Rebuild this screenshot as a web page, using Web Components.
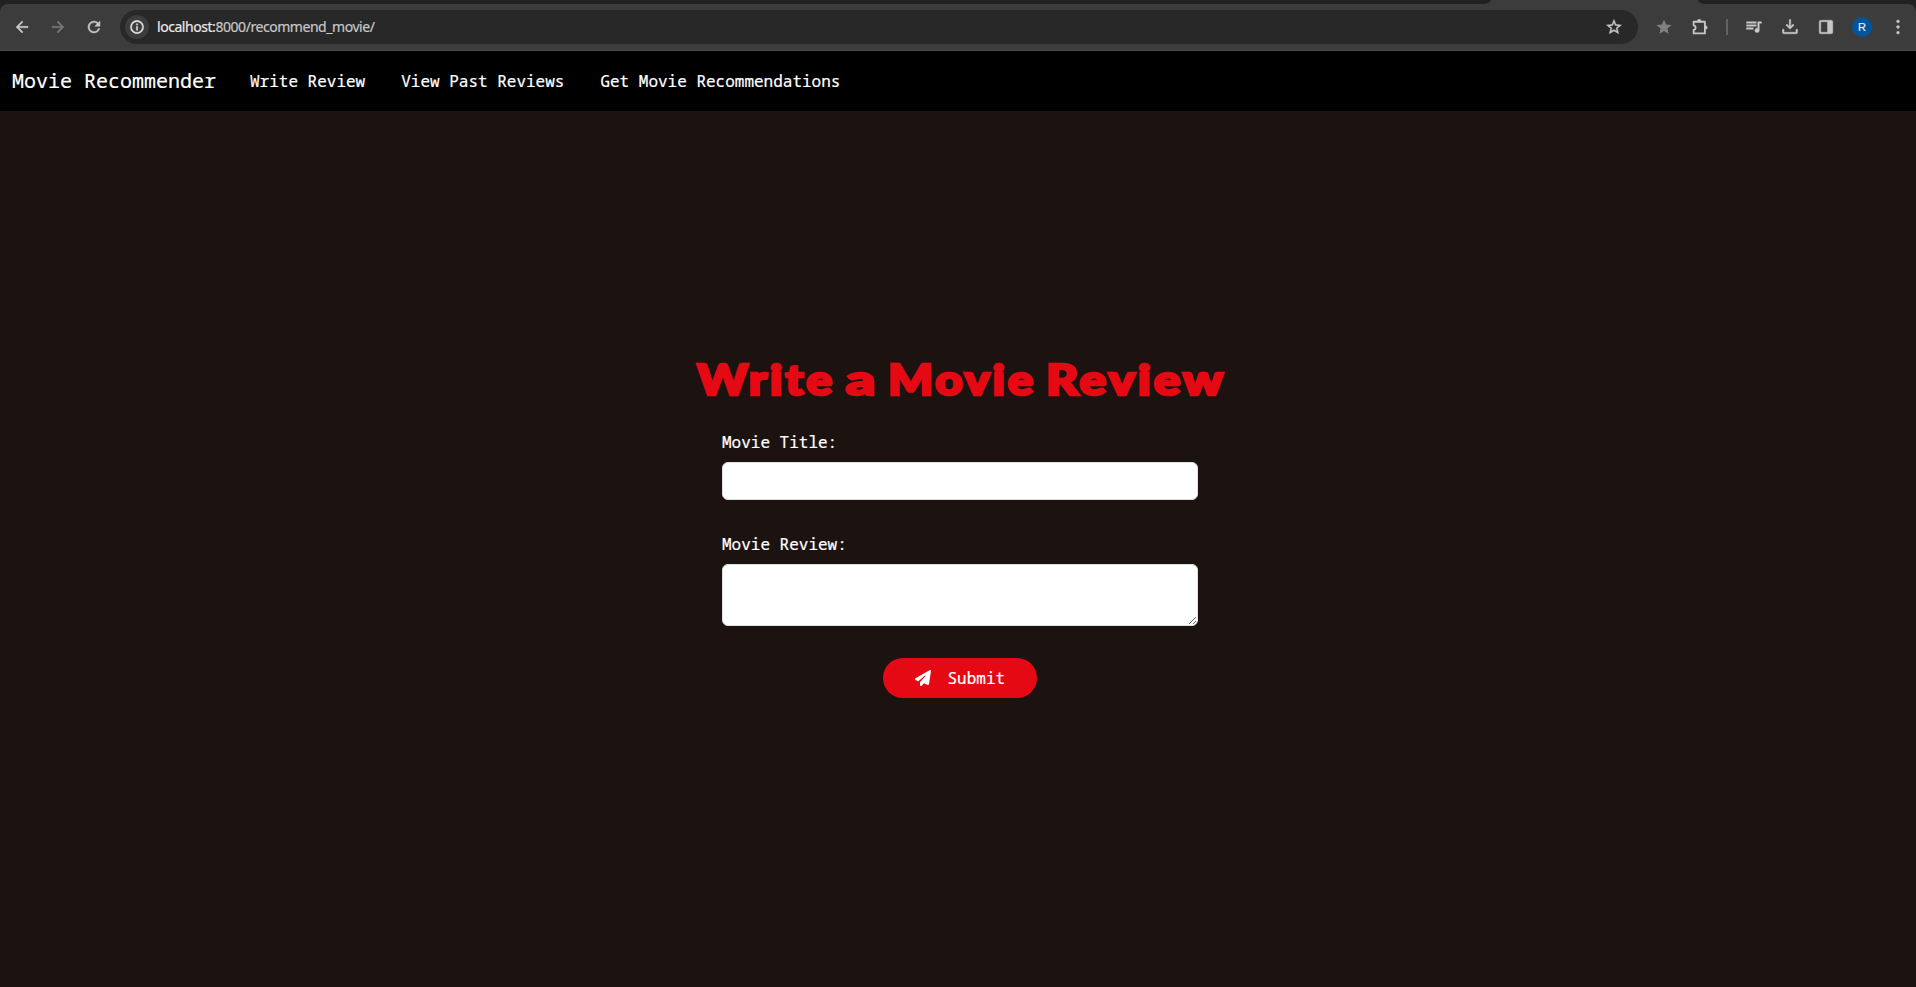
<!DOCTYPE html>
<html lang="en">
<head>
<meta charset="utf-8">
<title>Movie Recommender</title>
<style>
html,body{margin:0;height:100%;background:#1c1311;overflow:hidden}
</style>
</head>
<body>
<movie-app></movie-app>
<script>
const define = (name, html, setup) => customElements.define(name, class extends HTMLElement {
  constructor() {
    super();
    const t = document.createElement('template');
    t.innerHTML = html;
    this.attachShadow({mode: 'open'}).append(t.content.cloneNode(true));
    if (setup) setup(this, this.shadowRoot);
  }
});

const ICONS = {
  back: '<path d="M20 11H7.83l5.59-5.59L12 4l-8 8 8 8 1.41-1.41L7.83 13H20z"/>',
  forward: '<path d="M12 4l-1.41 1.41L16.17 11H4v2h12.17l-5.58 5.59L12 20l8-8z"/>',
  reload: '<path d="M17.65 6.35A7.96 7.96 0 0 0 12 4a8 8 0 1 0 7.73 10h-2.08A6 6 0 1 1 12 6c1.66 0 3.14.69 4.22 1.78L13 11h7V4z"/>',
  info: '<path d="M11 7h2v2h-2zm0 4h2v6h-2zm1-9a10 10 0 1 0 0 20 10 10 0 0 0 0-20zm0 18a8 8 0 1 1 0-16 8 8 0 0 1 0 16z"/>',
  star: '<path d="M22 9.24l-7.19-.62L12 2 9.19 8.63 2 9.24l5.46 4.73L5.82 21 12 17.27 18.18 21l-1.63-7.03zM12 15.4l-3.76 2.27 1-4.28-3.32-2.88 4.38-.38L12 6.1l1.71 4.04 4.38.38-3.32 2.88 1 4.28z"/>',
  starfill: '<path stroke="none" d="M12 17.27L18.18 21l-1.64-7.03L22 9.24l-7.19-.61L12 2 9.19 8.63 2 9.24l5.46 4.73L5.82 21z"/>',
  puzzle: '<path fill="none" stroke-width="2.4" stroke-linejoin="round" d="M3.500 5H18.500V20.500H3.500V16a3.200 3.200 0 0 0 0-6.300z"/><path d="M8.300 4.500a2.700 2.700 0 0 1 5.400 0zM19 10a2.700 2.700 0 0 1 0 5.400z"/>',
  queue: '<path d="M2 5h13v2H2zm0 4h13v2H2zm0 4h9v2H2zM17 5h5v2h-3v9.500a2.900 2.900 0 1 1-2-2.750z"/>',
  download: '<path d="M11 2h2v9.200l3.100-3.100 1.400 1.400L12 15 6.500 9.500l1.400-1.400 3.100 3.100zM2 15h2v4h16v-4h2v4a2 2 0 0 1-2 2H4a2 2 0 0 1-2-2z"/>',
  panel: '<path fill-rule="evenodd" d="M5 3h14a2 2 0 0 1 2 2v14a2 2 0 0 1-2 2H5a2 2 0 0 1-2-2V5a2 2 0 0 1 2-2zm0 2v14h9V5z"/>',
  dots: '<circle cx="12" cy="4.500" r="1.900"/><circle cx="12" cy="12" r="1.900"/><circle cx="12" cy="19.500" r="1.900"/>',
  plane: '<g stroke="none" transform="scale(.046875)"><path d="M498.100 5.600c10.100 7 15.400 19.100 13.500 31.200l-64 416c-1.500 9.700-7.400 18.200-16 23s-18.900 5.400-28 1.600L284 427.700l-68.500 74.100c-8.900 9.700-22.900 12.900-35.200 8.100S160 493.200 160 480V396.400c0-4 1.500-7.800 4.200-10.700L331.800 202.800c5.800-6.300 5.600-16-.4-22s-15.700-6.400-22-.7L106 360.800 17.700 316.600C7.100 311.300.3 300.700 0 288.900s5.900-22.800 16.100-28.700l448-256c10.700-6.100 23.900-5.500 34 1.400z"/></g>'
};
define('app-icon', `<style>:host{display:block;width:18px;height:18px;flex:none}svg{display:block;width:100%;height:100%;fill:currentColor;stroke:currentColor;stroke-width:.6px;overflow:visible}</style><svg viewBox="0 0 24 24"></svg>`,
  (host, root) => { root.querySelector('svg').innerHTML = ICONS[host.getAttribute('name')] || ''; });

define('tab-strip', `<style>
:host{display:flex;height:4px;background:#3c3c3c;justify-content:space-between}
i{display:block;background:#202221;height:4px}
.l{width:1491px;border-bottom-right-radius:8px 4px}.r{width:218px;border-bottom-left-radius:8px 4px}
</style><i class="l"></i><i class="r"></i>`);

define('address-bar', `<style>
:host{display:flex;align-items:center;box-sizing:border-box;width:1518px;height:34px;border-radius:17px;background:#282828;padding:0 15px 0 5px;color:#c7c7c7;font:14px "Noto Sans","Open Sans",sans-serif}
.info{display:grid;place-items:center;width:24px;height:24px;border-radius:50%;background:#3c3c3c;margin-right:8px}
.info app-icon{width:16px;height:16px;color:#e0e0e0}
.url{flex:1;white-space:pre;letter-spacing:-.45px;margin-top:-1px}
b{font-weight:400;color:#e8e8e8}
</style><span class="info"><app-icon name="info"></app-icon></span><span class="url"><b>localhost:</b>8000/recommend_movie/</span><app-icon name="star"></app-icon>`);

define('browser-toolbar', `<style>
:host{display:block;background:#202221}
.bar{display:flex;align-items:center;height:47px;box-sizing:border-box;background:#3c3c3c;border-bottom:1px solid #4b4b4b;border-radius:8px 8px 0 0;padding:0 9px 0 13px;color:#c7c7c7}
.nav{display:flex;gap:18px;margin-right:17px}.off{color:#777}
.right{display:flex;align-items:center;margin-left:17px;flex:1;gap:18px}
.sep{width:2px;height:16px;background:#626262;margin:0 -1px}
.av{width:20px;height:20px;border-radius:50%;background:#00559c;color:#e6eef7;display:grid;place-items:center;font:11px "Liberation Sans",sans-serif;margin:0 -1px}
.fs{color:#808080}
</style><div class="bar"><div class="nav"><app-icon name="back"></app-icon><app-icon class="off" name="forward"></app-icon><app-icon name="reload"></app-icon></div>
<address-bar></address-bar>
<div class="right"><app-icon class="fs" name="starfill"></app-icon><app-icon name="puzzle"></app-icon><span class="sep"></span><app-icon name="queue"></app-icon><app-icon name="download"></app-icon><app-icon name="panel"></app-icon><span class="av">R</span><app-icon name="dots"></app-icon></div></div>`);

define('nav-link', `<style>:host{display:block;font-size:16px;line-height:24px;white-space:pre}</style><slot></slot>`);
define('site-nav', `<style>
:host{display:flex;align-items:center;height:60px;background:#000;color:#fff;padding-left:12px;gap:36px}
.brand{font-size:20px;line-height:30px;white-space:pre;margin-right:-2px}
</style><span class="brand">Movie Recommender</span><nav-link>Write Review</nav-link><nav-link>View Past Reviews</nav-link><nav-link>Get Movie Recommendations</nav-link>`);

define('page-title', `<style>
:host{display:block;width:530px;height:58px}
svg{display:block;width:530px;height:58px;overflow:visible;fill:#e50914;stroke:#e50914;stroke-width:2.6px;letter-spacing:2.5px;font:900 41.5px Lato,sans-serif}
</style><svg viewBox="0 0 530 58"><text x="2" y="44" textLength="138" lengthAdjust="spacingAndGlyphs">Write</text><text x="151" y="44" textLength="33" lengthAdjust="spacingAndGlyphs">a</text><text x="193" y="44" textLength="148" lengthAdjust="spacingAndGlyphs">Movie</text><text x="351" y="44" textLength="180" lengthAdjust="spacingAndGlyphs">Review</text></svg>`);

define('form-field', `<style>
:host{display:block;width:476px}
label{display:block;font-size:16px;line-height:24px;margin-bottom:8px}
input,textarea{display:block;box-sizing:border-box;width:100%;height:38px;border:1px solid #dee2e6;border-radius:6px;background:#fff;outline:0;margin:0;padding:6px 12px;font:inherit}
textarea{height:62px;resize:vertical}
</style><label><slot></slot></label>`, (host, root) => {
  root.append(document.createElement(host.getAttribute('kind')));
});

define('submit-button', `<style>
:host{display:flex;align-items:center;box-sizing:border-box;width:154px;height:40px;border-radius:20px;background:#e50914;color:#fff;padding-left:32px;font-size:16px;line-height:24px}
app-icon{width:16px;height:16px;margin-right:16.5px}
</style><app-icon name="plane"></app-icon><slot></slot>`);

define('review-form', `<style>
:host{display:flex;flex-direction:column;align-items:center;padding-left:4px;padding-top:240px;color:#fff}
page-title{margin-bottom:21px}
form-field{margin-bottom:32px}
</style><page-title></page-title><form-field kind="input">Movie Title:</form-field><form-field kind="textarea">Movie Review:</form-field><submit-button>Submit</submit-button>`);

define('movie-app', `<style>
:host{display:block;height:987px;background:#1c1311;font-family:"Noto Sans Mono","DejaVu Sans Mono",monospace;-webkit-text-stroke:.2px}
</style><tab-strip></tab-strip><browser-toolbar></browser-toolbar><site-nav></site-nav><review-form></review-form>`);
</script>
</body>
</html>
